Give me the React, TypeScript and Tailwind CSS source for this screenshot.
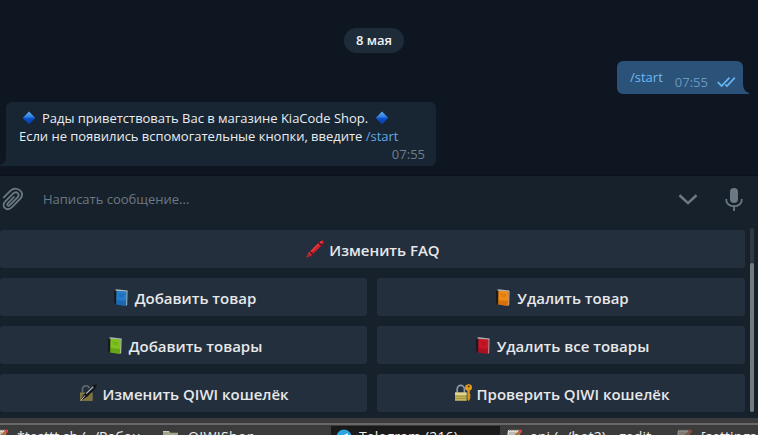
import React from "react";

function Diamond() {
  return (
    <svg width="14" height="14" viewBox="0 0 14 14" className="shrink-0">
      <defs>
        <linearGradient id="dia" x1="0" y1="0" x2="0" y2="1">
          <stop offset="0" stopColor="#5fb0f2" />
          <stop offset="0.42" stopColor="#2f7fe0" />
          <stop offset="0.55" stopColor="#0c50cc" />
          <stop offset="1" stopColor="#0a3da8" />
        </linearGradient>
      </defs>
      <path d="M7 .5 13.3 7 7 13.3.7 7Z" fill="url(#dia)" />
    </svg>
  );
}

function Book({ face, dark, edge }: { face: string; dark: string; edge: string }) {
  return (
    <svg width="20" height="20" viewBox="0 0 20 20" className="mt-[1px] shrink-0">
      <path d="M3.4 2.2 5.5 1.2 16.6 2.6 16 4 5 3.2Z" fill="#aeb6ba" />
      <path d="M3 2.2 5.8 2.8 6 16.8 3.2 15.2Z" fill="#17191c" />
      <path d="M5.4 2.8 15.4 3.6 15 18 5.2 16.4Z" fill={face} />
      <path d="M5.3 12 15.2 13 15 18 5.2 16.4Z" fill={dark} opacity=".4" />
      <path d="M15.4 3.6 16.6 2.8 16.2 16.8 15 18Z" fill={edge} />
      <path d="M7.5 6 9.5 6.2M10.5 6.6 13 6.8M8.5 8 12 8.3" stroke={dark} strokeWidth=".8" opacity=".6" />
    </svg>
  );
}

function Crayon() {
  return (
    <svg width="20" height="20" viewBox="0 0 20 20" className="shrink-0">
      <path d="M1.2 18.7 2.6 15.5 4.6 17.3Z" fill="#d02a30" />
      <path d="M2.6 14.8 13.8 3.4 17.6 1.2 18.8 2.4 17.2 6 5.4 17.4Z" fill="#d51f2a" />
      <path d="M4 14.6 14.3 4.2 17 2.4" stroke="#f4575b" strokeWidth="1" fill="none" />
      <path d="M5 12.6 7.6 15.2M13.6 3.8 16.9 6.6" stroke="#351419" strokeWidth="1.3" />
    </svg>
  );
}

function LockPen() {
  return (
    <svg width="20" height="20" viewBox="0 0 20 20" className="shrink-0">
      <path d="M4.5 9.5V6.3a3.5 3.5 0 0 1 6.8-1.2" stroke="#5d6a73" strokeWidth="1.7" fill="none" />
      <path d="M2 9.5h12.6v8.3H2Z" fill="#8d8145" />
      <path d="M2 11.7h12.6M2 13.8h12.6M2 15.9h12.6" stroke="#6c6235" strokeWidth=".8" />
      <path d="M2 18.2 5.2 12 14.5 2.6 19 1 17.7 5 9.5 13.4Z" fill="#12161b" />
      <path d="M2.6 17.8 7 12.4" stroke="#c9cfd1" strokeWidth="1" />
      <path d="m8.2 10.6 7-6.8" stroke="#aeb9c0" strokeWidth="1.3" />
    </svg>
  );
}

function LockKey() {
  return (
    <svg width="20" height="20" viewBox="0 0 20 20" className="shrink-0">
      <path d="M4.2 10V6.3a3.6 3.9 0 0 1 7.2 0V10" stroke="#8b9ca7" strokeWidth="1.7" fill="none" />
      <path d="M2 9.5h11.6v8.3H2Z" fill="#c4b55c" />
      <path d="M2 9.5h11.6v2.5H2Z" fill="#ded391" />
      <path d="M2 13.2h11.6M2 15.4h11.6" stroke="#9a8a3c" strokeWidth=".8" />
      <path d="M14.4 7.5v9l1.2 1.4 1.2-1.2v-1.5l1-.8-1-1.1 1-1.3-1-1V7.5" fill="#dc9414" />
      <path d="M12.4 2.4 14.6 1.2h2.4l1.9 1.7v3L17 7.8h-3l-2-1.9Z" fill="#e69c18" />
      <circle cx="15.7" cy="3.5" r="1" fill="#463721" />
    </svg>
  );
}

function Key({ icon, label, width }: { icon: React.ReactNode; label: string; width: string }) {
  return (
    <div className={`${width} flex h-[38px] items-center justify-center gap-[4px] rounded-[3px] bg-[#242f3d] text-[15px] font-semibold leading-[20px] whitespace-nowrap text-[#e6e8ea]`}>
      {icon}
      <span className="mt-[2px]">{label}</span>
    </div>
  );
}

function Note({ dim }: { dim?: boolean }) {
  return (
    <svg width="18" height="16" viewBox="0 0 18 16" className={dim ? "shrink-0 opacity-50" : "shrink-0"}>
      <path d="M2 1h12l-1.5 15H0Z" fill="#e2ddd5" />
      <path d="M3 1.2h10" stroke="#8c8178" strokeWidth="1.6" strokeDasharray="1.2 1" />
      <path d="M3 4h7M2.5 6h5" stroke="#9a948d" />
      <path d="m7 9 1-3L13 1.8l2.2 2L10 9Z" fill="#a67443" />
      <path d="M12.6 2 14 .8h2V3l-1.3 1.4Z" fill="#e13e45" />
    </svg>
  );
}

function FolderIcon() {
  return (
    <svg width="17" height="16" viewBox="0 0 17 16" className="shrink-0">
      <path d="M0 1h6l1.5 1.8H15V16H0Z" fill="#a2a58c" />
      <path d="M3 5h13v11H3Z" fill="#d0d2bc" />
      <path d="M0 1.5h6" stroke="#c8cbb3" />
    </svg>
  );
}

function Plane() {
  return (
    <svg width="16" height="16" viewBox="0 0 16 16" className="shrink-0">
      <circle cx="8" cy="8" r="7.5" fill="#2ca5e0" />
      <path d="m3 8 9-3.7L10.6 12 7.6 10 6 11.5V9Z" fill="#fff" />
    </svg>
  );
}

export default function App() {
  return (
    <div className="flex h-[435px] w-[758px] flex-col overflow-hidden bg-[#0e1621] font-['Open_Sans','Noto_Sans',sans-serif] text-[13px]">
      <main className="flex h-[175px] shrink-0 flex-col pt-[28px]">
        <div className="ml-[344px] flex h-[25px] w-[60px] items-center justify-center rounded-full bg-[#1e2c3a] text-[13px] font-semibold text-[#f0f2f3]">8 мая</div>
        <div className="relative mt-[8px] ml-[617px] flex h-[33px] w-[126px] rounded-[6px] rounded-br-none bg-[#2b5278] pl-[13px]">
          <span className="mt-[7px] leading-[18px] text-[#70b8f3]">/start</span>
          <span className="mt-[12px] ml-[12px] leading-[18px] text-[#6b97bf]">07:55</span>
          <svg width="19" height="12" viewBox="0 0 19 12" className="mt-[15px] ml-[9px]" fill="none" stroke="#65b4f5" strokeWidth="1.8">
            <path d="m.8 6.2 3.8 3.8L12.4 1.6M8.2 8.6l1.8 1.4L17.8 1.6" />
          </svg>
          <svg width="6" height="10" viewBox="0 0 6 10" className="absolute bottom-0 left-full">
            <path d="M0 0Q0 7 6 9V10H0Z" fill="#2b5278" />
          </svg>
        </div>
        <div className="relative mt-[8px] ml-[6px] flex h-[64px] w-[430px] flex-col rounded-[6px] rounded-bl-none bg-[#182533] pt-[7px] pl-[13px] leading-[18px] whitespace-nowrap text-[#e9edf0]">
          <svg width="6" height="10" viewBox="0 0 6 10" className="absolute right-full bottom-0">
            <path d="M6 0Q6 7 0 9V10H6Z" fill="#182533" />
          </svg>
          <div className="flex h-[18px] items-center pl-[3px]">
            <Diamond />
            <span className="mr-[7px] ml-[6px] tracking-[-0.02px]">Рады приветствовать Вас в магазине KiaCode Shop.</span>
            <Diamond />
          </div>
          <div className="tracking-[-0.02px]">Если не появились вспомогательные кнопки, введите <span className="text-[#62a9e6]">/start</span></div>
          <div className="pr-[11px] text-right text-[#6d7f8f]">07:55</div>
        </div>
      </main>

      <section className="flex h-[243px] shrink-0 flex-col border-t border-[#0a121b] bg-[#17212b]">
        <div className="flex h-[54px] shrink-0 items-start pt-[10px]">
          <svg width="24" height="26" viewBox="0 0 24 26" fill="none" stroke="#6c7883" strokeWidth="1.8" strokeLinecap="round">
            <path d="M3.8 11.4 10.6 4.7c5.6-5 14.9 1 10.2 7.4l-8.7 9c-5.9 5.2-11.3-1-6.8-5.7l8-8c3.2-3 7.1.8 4.2 3.9l-7.7 7.9c-1.7 1.5-3.3-.3-1.9-1.9l6-6.3" />
          </svg>
          <span className="mt-[4px] ml-[19px] leading-[18px] text-[#6c7883]">Написать сообщение...</span>
          <svg width="20" height="14" viewBox="0 0 20 14" className="mt-[7px] ml-auto" fill="none" stroke="#6c7883" strokeWidth="2.6">
            <path d="m1.5 2.2 8.5 7.9 8.5-7.9" />
          </svg>
          <svg width="18" height="24" viewBox="0 0 18 24" className="mt-[2px] mr-[15px] ml-[27px]" fill="none" stroke="#6c7883" strokeWidth="1.8">
            <rect x="5" y="0" width="8" height="15" rx="4" fill="#6c7883" stroke="none" />
            <path d="M1.3 11v1.2a7.7 6 0 0 0 15.4 0V11M9 18v5" />
          </svg>
        </div>
        <div className="flex gap-[5px]">
          <div className="flex w-[745px] flex-col gap-[10px]">
            <div className="flex"><Key width="w-[744px] grow" icon={<Crayon />} label="Изменить FAQ" /></div>
            <div className="flex gap-[10px]">
              <Key width="w-[367px]" icon={<Book face="#237bc9" dark="#124e8d" edge="#8bafc9" />} label="Добавить товар" />
              <Key width="w-[368px]" icon={<Book face="#f18a12" dark="#b34c08" edge="#dca568" />} label="Удалить товар" />
            </div>
            <div className="flex gap-[10px]">
              <Key width="w-[367px]" icon={<Book face="#7fc21d" dark="#427d0d" edge="#b3ce8b" />} label="Добавить товары" />
              <Key width="w-[368px]" icon={<Book face="#cc1427" dark="#790d19" edge="#c98187" />} label="Удалить все товары" />
            </div>
            <div className="flex gap-[10px]">
              <Key width="w-[367px]" icon={<LockPen />} label="Изменить QIWI кошелёк" />
              <Key width="w-[368px]" icon={<LockKey />} label="Проверить QIWI кошелёк" />
            </div>
          </div>
          <div className="-mt-[2px] flex h-[184px] w-[4px] flex-col justify-end rounded-full bg-[#303940]">
            <div className="h-[149px] rounded-full bg-[#747b80]" />
          </div>
        </div>
      </section>

      <footer className="h-[17px] shrink-0 overflow-hidden bg-[#3b3b3b]">
        <div className="mt-[5px] h-[2px] bg-[#686868]" />
        <div className="flex h-[30px] pt-px text-[14px] leading-[20px] whitespace-nowrap text-[#eeeeee]">
          <div className="flex w-[163px] shrink-0 items-start">
            <div className="-ml-[8px] pt-[3px]"><Note /></div>
            <span className="ml-[7px] pt-px">*testtt.sh (~/Рабоч</span>
          </div>
          <div className="flex w-[168px] shrink-0 items-start">
            <div className="pt-[4px]"><FolderIcon /></div>
            <span className="ml-[8px] pt-px tracking-[0.35px]">QIWIShop</span>
          </div>
          <div className="flex w-[169px] shrink-0 items-start bg-linear-to-b from-[#181818] to-[#292929] pl-[5px]">
            <div className="pt-[3px]"><Plane /></div>
            <span className="ml-[7px] pt-px tracking-[0.15px]">Telegram (216)</span>
          </div>
          <div className="flex w-[176px] shrink-0 items-start pl-[6px]">
            <div className="pt-[3px]"><Note /></div>
            <span className="ml-[6px] pt-px tracking-[0.1px]">api (~/bot2) - gedit</span>
          </div>
          <div className="flex shrink-0 items-start">
            <div className="pt-[3px]"><Note dim /></div>
            <span className="ml-[7px] pt-px">[settings</span>
          </div>
        </div>
      </footer>
    </div>
  );
}
